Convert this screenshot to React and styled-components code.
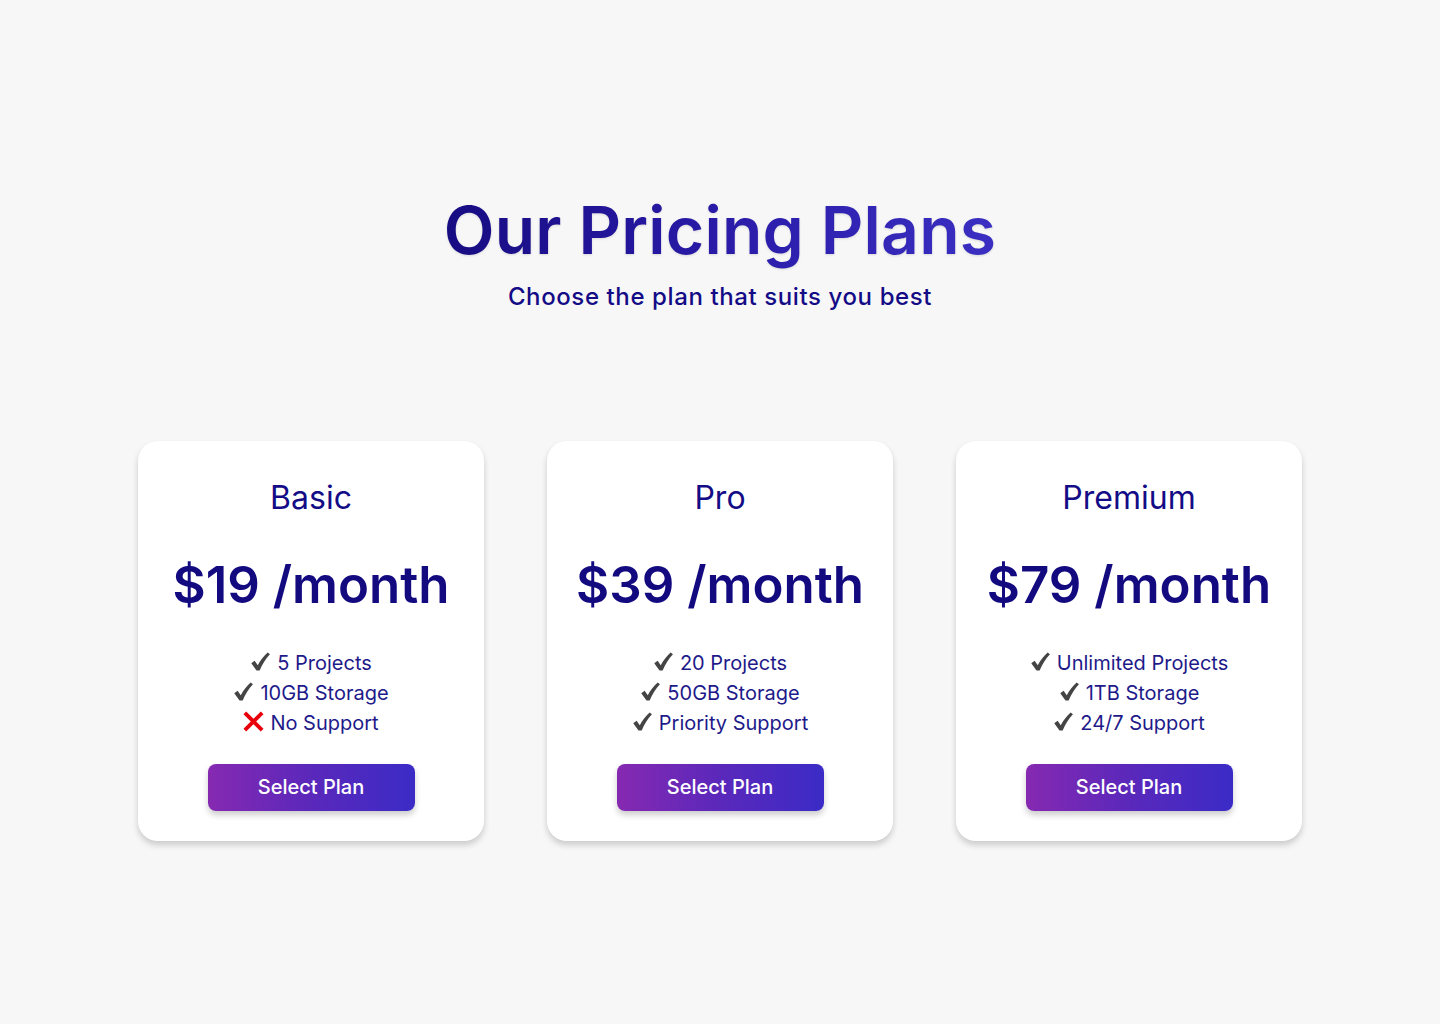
import styled, { createGlobalStyle } from "styled-components";

const GlobalStyle = createGlobalStyle`
  * {
    box-sizing: border-box;
  }

  body {
    margin: 0;
    background-color: #f7f7f7;
    font-family: Inter, "Noto Sans", sans-serif;
  }
`;

const Page = styled.main`
  min-height: 100vh;
  padding-top: 191px;
`;

const Header = styled.header`
  text-align: center;
`;

const Title = styled.h1`
  background: linear-gradient(to right, #170c82 0%, #2a1ba8 50%, #3a2fc2 100%);
  -webkit-background-clip: text;
  background-clip: text;
  color: transparent;
  display: inline-block;
  filter: drop-shadow(0 1px 1px rgba(0, 0, 0, 0.12));
  font-size: 66px;
  font-weight: 600;
  letter-spacing: 0.2px;
  line-height: 1.2;
  margin: 0;
`;

const Subtitle = styled.p`
  color: #140c86;
  font-size: 24px;
  font-weight: 500;
  letter-spacing: 0.6px;
  line-height: 1.2;
  margin: 13px 0 0;
`;

const Plans = styled.section`
  display: grid;
  gap: 63px;
  grid-template-columns: repeat(3, 346px);
  justify-content: center;
  margin-top: 129px;
`;

const Card = styled.article`
  align-items: center;
  background-color: #ffffff;
  border-radius: 20px;
  box-shadow: 0 4px 6px rgba(0, 0, 0, 0.18);
  display: flex;
  flex-direction: column;
  height: 400px;
  padding: 38px 0 30px;
`;

const PlanName = styled.h3`
  color: #140c86;
  font-size: 32px;
  font-weight: 400;
  line-height: 1.2;
  margin: 0;
`;

const Price = styled.div`
  color: #140a80;
  font-size: 51px;
  font-weight: 600;
  line-height: 1.2;
  margin-top: 37px;
`;

const Features = styled.ul`
  list-style: none;
  margin: 32px 0 0;
  padding: 0;
  text-align: center;
`;

const Feature = styled.li`
  align-items: center;
  color: #1e1a8a;
  display: flex;
  font-size: 20px;
  gap: 6px;
  justify-content: center;
  line-height: 30px;
`;

const Mark = styled.svg`
  flex: none;
  height: 21px;
  margin-top: -3px;
  width: 21px;
`;

const SelectButton = styled.button`
  background: linear-gradient(to right, #8629b1 0%, #5a28bb 50%, #3b2bc6 100%);
  border: none;
  border-radius: 8px;
  box-shadow: 0 4px 6px rgba(0, 0, 0, 0.2);
  color: #ffffff;
  cursor: pointer;
  font-family: inherit;
  font-size: 20px;
  font-weight: 500;
  height: 47px;
  margin-top: 26px;
  width: 207px;
`;

const plans = [
  {
    name: "Basic",
    price: "$19",
    features: [
      { text: "5 Projects", ok: true },
      { text: "10GB Storage", ok: true },
      { text: "No Support", ok: false },
    ],
  },
  {
    name: "Pro",
    price: "$39",
    features: [
      { text: "20 Projects", ok: true },
      { text: "50GB Storage", ok: true },
      { text: "Priority Support", ok: true },
    ],
  },
  {
    name: "Premium",
    price: "$79",
    features: [
      { text: "Unlimited Projects", ok: true },
      { text: "1TB Storage", ok: true },
      { text: "24/7 Support", ok: true },
    ],
  },
];

function Check() {
  return (
    <Mark viewBox="0 0 20 20">
      <path
        d="M1.2 11.6 L4.4 9.2 L7.4 13.6 C10 8.6 13.2 4.6 16.8 1.4 L19 3 C15 7.2 11.6 12.4 9.2 18.6 L6.2 18.6 Z"
        fill="#444444"
      />
    </Mark>
  );
}

function Cross() {
  return (
    <Mark viewBox="0 0 20 20">
      <path
        d="M3 3 L17 17 M17 3 L3 17"
        stroke="#e8000b"
        strokeWidth="3.6"
        strokeLinecap="square"
      />
    </Mark>
  );
}

export default function App() {
  return (
    <>
      <GlobalStyle />
      <Page>
        <Header>
          <Title>Our Pricing Plans</Title>
          <Subtitle>Choose the plan that suits you best</Subtitle>
        </Header>
        <Plans>
          {plans.map((plan) => (
            <Card key={plan.name}>
              <PlanName>{plan.name}</PlanName>
              <Price>{plan.price} /month</Price>
              <Features>
                {plan.features.map((feature) => (
                  <Feature key={feature.text}>
                    {feature.ok ? <Check /> : <Cross />}
                    {feature.text}
                  </Feature>
                ))}
              </Features>
              <SelectButton>Select Plan</SelectButton>
            </Card>
          ))}
        </Plans>
      </Page>
    </>
  );
}
